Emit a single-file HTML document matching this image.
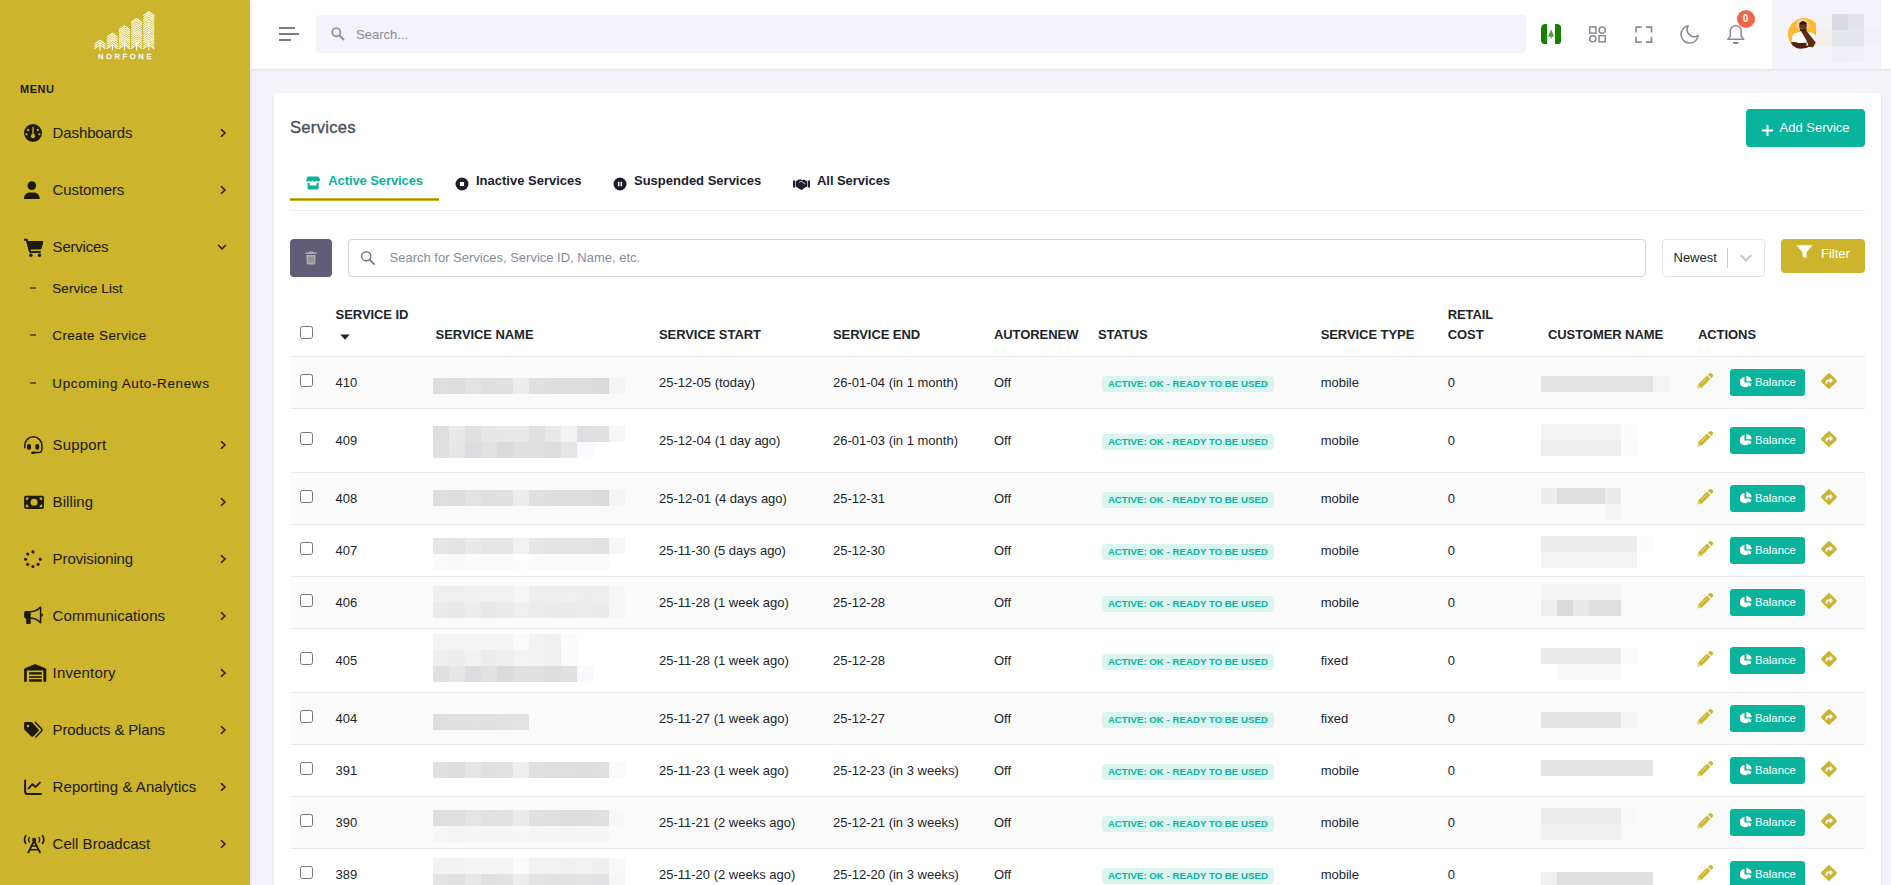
<!DOCTYPE html>
<html lang="en"><head><meta charset="utf-8"><title>Services</title>
<style>
*{box-sizing:border-box;margin:0;padding:0}
html,body{width:1891px;height:885px;overflow:hidden}
body{font-family:"Liberation Sans",Arial,sans-serif;font-size:13px;line-height:1.5;color:#212529;background:#f3f3f9;position:relative}
.abs{position:absolute}
#sidebar{position:absolute;left:0;top:0;width:250px;height:885px;background:#ccb42c;box-shadow:0 2px 4px rgba(15,34,58,.12);z-index:5}
#topbar{position:absolute;left:250px;top:0;width:1641px;height:69px;background:#fff;box-shadow:0 1px 2px rgba(56,65,74,.1);z-index:3}
.menu-title{position:absolute;left:20px;top:81px;font-size:11px;font-weight:700;letter-spacing:.5px;color:#1d1a08;line-height:16px}
.nav-item{position:absolute;left:0;width:250px;height:24px;color:#1d1a08;font-size:15px;line-height:24px}
.nav-item .ic{position:absolute;left:22px;top:0;width:26px;height:24px}
.nav-item .tx{position:absolute;left:52.6px;top:0;white-space:nowrap}
.nav-item .ch{position:absolute;left:218.7px;top:7.1px;width:8px;height:10px}
.sub-item{position:absolute;left:0;width:250px;height:20px;color:#1d1a08;font-size:13.5px;line-height:20px}
.sub-item .ds{position:absolute;left:30.3px;top:8.3px;width:6px;height:1.5px;background:#655a18}
.sub-item .tx{position:absolute;left:52.3px;top:0;white-space:nowrap;-webkit-text-stroke:.1px #1d1a08}
#card{position:absolute;left:274px;top:93px;width:1607px;height:900px;background:#fff;border-radius:4px;box-shadow:0 1px 2px rgba(56,65,74,.15)}
h4.title{position:absolute;left:290px;top:116px;font-size:16.6px;font-weight:400;color:#495057;line-height:24px;letter-spacing:.28px;-webkit-text-stroke:.35px #495057}
.btn-add{position:absolute;left:1746px;top:109px;width:119px;height:38px;background:#0ab39c;border-radius:4px;color:#fff;font-size:13px;line-height:38px}
.tab{position:absolute;top:171px;height:20px;font-weight:700;font-size:13px;line-height:20px;color:#1c1c2c;white-space:nowrap}
.tabline{position:absolute;left:290px;top:210px;width:1575px;height:1px;background:#e9ebec}
table{position:absolute;left:290px;top:293px;width:1575px;border-collapse:collapse;table-layout:fixed}
th{font-weight:700;text-align:left;vertical-align:bottom;padding:12px 9.6px;color:#212529;text-transform:uppercase;border-bottom:1px solid #e9ebec;line-height:19.5px;font-size:13px;letter-spacing:-.07px}
td{padding:12px 9.6px;vertical-align:middle;border-bottom:1px solid #e9ebec;line-height:19.5px;white-space:nowrap;height:52px}
tr.s td{background:#fafafa}
tr.t td{height:64px}
.cb{display:inline-block;width:13px;height:13px;border:1px solid #767676;border-radius:2.5px;background:#fff;vertical-align:middle;position:relative;top:-2.5px}
.badge{display:inline-block;background:#daf4f0;color:#0ab39c;font-size:9.7px;font-weight:700;line-height:9.7px;padding:3px 5.9px;border-radius:4px;margin-left:4px;position:relative;top:.4px}
.bal{position:absolute;width:75px;height:27px;background:#0ab39c;border-radius:3.2px;color:#fff;font-size:11.375px;line-height:27px}
.blk{position:absolute;height:16px}
</style></head>
<body>
<div id="sidebar">
<svg class="abs" style="left:0;top:0" width="250" height="70" viewBox="0 0 250 70"><path d="M94.50 44.40 L100.00 40.20 L105.50 44.40 M94.50 46.60 L100.00 42.40 L105.50 46.60 M94.50 48.80 L100.00 44.60 L105.50 48.80" fill="none" stroke="#fffef4" stroke-width="1.100" stroke-linejoin="miter"/><path d="M100.00 44.60 V50.4" stroke="#fffef4" stroke-width="1.200" fill="none"/><path d="M106.90 37.40 L112.40 33.20 L117.90 37.40 M106.90 39.68 L112.40 35.48 L117.90 39.68 M106.90 41.96 L112.40 37.76 L117.90 41.96 M106.90 44.24 L112.40 40.04 L117.90 44.24 M106.90 46.52 L112.40 42.32 L117.90 46.52 M106.90 48.80 L112.40 44.60 L117.90 48.80" fill="none" stroke="#fffef4" stroke-width="1.100" stroke-linejoin="miter"/><path d="M112.40 44.60 V50.4" stroke="#fffef4" stroke-width="1.200" fill="none"/><path d="M119.00 30.00 L124.50 25.80 L130.00 30.00 M119.00 32.09 L124.50 27.89 L130.00 32.09 M119.00 34.18 L124.50 29.98 L130.00 34.18 M119.00 36.27 L124.50 32.07 L130.00 36.27 M119.00 38.36 L124.50 34.16 L130.00 38.36 M119.00 40.44 L124.50 36.24 L130.00 40.44 M119.00 42.53 L124.50 38.33 L130.00 42.53 M119.00 44.62 L124.50 40.42 L130.00 44.62 M119.00 46.71 L124.50 42.51 L130.00 46.71 M119.00 48.80 L124.50 44.60 L130.00 48.80" fill="none" stroke="#fffef4" stroke-width="1.100" stroke-linejoin="miter"/><path d="M124.50 44.60 V50.4" stroke="#fffef4" stroke-width="1.200" fill="none"/><path d="M131.10 22.70 L136.60 18.50 L142.10 22.70 M131.10 24.88 L136.60 20.68 L142.10 24.88 M131.10 27.05 L136.60 22.85 L142.10 27.05 M131.10 29.22 L136.60 25.02 L142.10 29.22 M131.10 31.40 L136.60 27.20 L142.10 31.40 M131.10 33.57 L136.60 29.37 L142.10 33.57 M131.10 35.75 L136.60 31.55 L142.10 35.75 M131.10 37.92 L136.60 33.72 L142.10 37.92 M131.10 40.10 L136.60 35.90 L142.10 40.10 M131.10 42.27 L136.60 38.07 L142.10 42.27 M131.10 44.45 L136.60 40.25 L142.10 44.45 M131.10 46.62 L136.60 42.42 L142.10 46.62 M131.10 48.80 L136.60 44.60 L142.10 48.80" fill="none" stroke="#fffef4" stroke-width="1.100" stroke-linejoin="miter"/><path d="M136.60 44.60 V50.4" stroke="#fffef4" stroke-width="1.200" fill="none"/><path d="M143.30 15.80 L148.80 11.60 L154.30 15.80 M143.30 18.00 L148.80 13.80 L154.30 18.00 M143.30 20.20 L148.80 16.00 L154.30 20.20 M143.30 22.40 L148.80 18.20 L154.30 22.40 M143.30 24.60 L148.80 20.40 L154.30 24.60 M143.30 26.80 L148.80 22.60 L154.30 26.80 M143.30 29.00 L148.80 24.80 L154.30 29.00 M143.30 31.20 L148.80 27.00 L154.30 31.20 M143.30 33.40 L148.80 29.20 L154.30 33.40 M143.30 35.60 L148.80 31.40 L154.30 35.60 M143.30 37.80 L148.80 33.60 L154.30 37.80 M143.30 40.00 L148.80 35.80 L154.30 40.00 M143.30 42.20 L148.80 38.00 L154.30 42.20 M143.30 44.40 L148.80 40.20 L154.30 44.40 M143.30 46.60 L148.80 42.40 L154.30 46.60 M143.30 48.80 L148.80 44.60 L154.30 48.80" fill="none" stroke="#fffef4" stroke-width="1.100" stroke-linejoin="miter"/><path d="M148.80 44.60 V50.4" stroke="#fffef4" stroke-width="1.200" fill="none"/><text x="97.9" y="59.2" font-family="Liberation Sans, Arial, sans-serif" font-size="7.500" font-weight="400" fill="#fffef4" stroke="#fffef4" stroke-width=".3" textLength="53.5" lengthAdjust="spacing">NORFONE</text></svg>
<div class="menu-title">MENU</div>
<div class="nav-item" style="top:121px"><svg class="ic" viewBox="0 0 26 24"><g transform="translate(0 1)"><circle cx="11" cy="11" r="9" fill="#1d1a08"/><circle cx="11" cy="14.2" r="2.1" fill="#ccb42c"/><rect x="10.3" y="5" width="1.4" height="8" fill="#ccb42c"/><circle cx="6.2" cy="8" r="1.15" fill="#ccb42c"/><circle cx="15.8" cy="8" r="1.15" fill="#ccb42c"/><circle cx="4.6" cy="12.3" r="1.15" fill="#ccb42c"/><circle cx="17.4" cy="12.3" r="1.15" fill="#ccb42c"/></g></svg><span class="tx" style="letter-spacing:-0.118px">Dashboards</span><svg class="ch" viewBox="0 0 8 10"><path d="M2 1.200L6 5 2 8.800" fill="none" stroke="#1d1a08" stroke-width="1.500"/></svg></div>
<div class="nav-item" style="top:178px"><svg class="ic" viewBox="0 0 26 24"><g transform="translate(-1.2 1)"><circle cx="11" cy="6.6" r="4.3" fill="#1d1a08"/><path d="M3.1 20c0-4.2 2.600-6.600 6-6.600h3.800c3.400 0 6 2.400 6 6.600z" fill="#1d1a08"/></g></svg><span class="tx" style="letter-spacing:-0.102px">Customers</span><svg class="ch" viewBox="0 0 8 10"><path d="M2 1.200L6 5 2 8.800" fill="none" stroke="#1d1a08" stroke-width="1.500"/></svg></div>
<div class="nav-item" style="top:235px"><svg class="ic" viewBox="0 0 26 24"><g transform="translate(.5 1)"><path d="M1.500 2.800h2.800c.5 0 .9.300 1 .8l.3 1.400h14.200c.7 0 1.200.700 1 1.300l-1.800 6.500c-.100.500-.500.800-1 .8H8.200l.300 1.500h9.700v2H7.600c-.5 0-.9-.300-1-.8L3.500 4.800h-2z" fill="#1d1a08"/><circle cx="8.400" cy="19.200" r="1.700" fill="#1d1a08"/><circle cx="17" cy="19.200" r="1.700" fill="#1d1a08"/></g></svg><span class="tx" style="letter-spacing:-0.215px">Services</span><svg class="ch" style="width:10px;height:8px;left:217px;top:7.600px" viewBox="0 0 10 8"><path d="M1.200 2L5 6 8.800 2" fill="none" stroke="#1d1a08" stroke-width="1.500"/></svg></div>
<div class="nav-item" style="top:433px"><svg class="ic" viewBox="0 0 26 24"><path d="M2.800 14.700V12.400a8.550 8.550 0 0 1 17.100 0V16.400a3.200 3.200 0 0 1-3.200 3.200H12" fill="none" stroke="#1d1a08" stroke-width="1.500" stroke-linecap="round"/><rect x="5" y="10.900" width="4" height="5.900" rx="1.800" fill="#1d1a08"/><rect x="13.400" y="10.900" width="3.800" height="5.900" rx="1.800" fill="#1d1a08"/><ellipse cx="11.100" cy="19.800" rx="2.100" ry="1.250" fill="#1d1a08"/></svg><span class="tx" style="letter-spacing:0.180px">Support</span><svg class="ch" viewBox="0 0 8 10"><path d="M2 1.200L6 5 2 8.800" fill="none" stroke="#1d1a08" stroke-width="1.500"/></svg></div>
<div class="nav-item" style="top:490px"><svg class="ic" viewBox="0 0 26 24"><rect x="2.100" y="5.800" width="19.900" height="13.100" rx="1.800" fill="#1d1a08"/><circle cx="12.050" cy="12.350" r="3.500" fill="#ccb42c"/><path d="M3.900 7.500h2.700a2.700 2.700 0 0 1-2.700 2.700zM20.200 7.500h-2.700a2.700 2.700 0 0 0 2.700 2.700zM3.900 17.200h2.700a2.700 2.700 0 0 0-2.700-2.700zM20.200 17.200h-2.700a2.700 2.700 0 0 1 2.700-2.700z" fill="#ccb42c"/></svg><span class="tx" style="letter-spacing:0.083px">Billing</span><svg class="ch" viewBox="0 0 8 10"><path d="M2 1.200L6 5 2 8.800" fill="none" stroke="#1d1a08" stroke-width="1.500"/></svg></div>
<div class="nav-item" style="top:547px"><svg class="ic" viewBox="0 0 26 24"><circle cx="10.90" cy="4.90" r="1.550" fill="#1d1a08"/><circle cx="5.74" cy="7.04" r="1.550" fill="#1d1a08"/><circle cx="3.60" cy="12.20" r="1.550" fill="#1d1a08"/><circle cx="5.74" cy="17.36" r="1.550" fill="#1d1a08"/><circle cx="10.90" cy="19.50" r="1.550" fill="#1d1a08"/><circle cx="16.06" cy="17.36" r="1.550" fill="#1d1a08"/><circle cx="18.20" cy="12.20" r="1.550" fill="#1d1a08"/></svg><span class="tx" style="letter-spacing:-0.101px">Provisioning</span><svg class="ch" viewBox="0 0 8 10"><path d="M2 1.200L6 5 2 8.800" fill="none" stroke="#1d1a08" stroke-width="1.500"/></svg></div>
<div class="nav-item" style="top:604px"><svg class="ic" viewBox="0 0 26 24"><path d="M3.900 7h4.800v7.500H3.900a1.800 1.800 0 0 1-1.800-1.800V8.800A1.800 1.800 0 0 1 3.900 7z" fill="#1d1a08"/><path d="M4.200 14h4.500v5c0 .6-.4 1-1 1H5.200c-.6 0-1-.4-1-1z" fill="#1d1a08"/><path d="M8.600 7.700C13 7.500 16.400 5.700 18.600 3.100V18.800C16.400 16.200 13 14.200 8.600 13.900" fill="none" stroke="#1d1a08" stroke-width="1.500" stroke-linejoin="round"/><path d="M19.300 9.300a1.700 1.700 0 0 1 0 3.400z" fill="#1d1a08"/></svg><span class="tx" style="letter-spacing:0.056px">Communications</span><svg class="ch" viewBox="0 0 8 10"><path d="M2 1.200L6 5 2 8.800" fill="none" stroke="#1d1a08" stroke-width="1.500"/></svg></div>
<div class="nav-item" style="top:661px"><svg class="ic" viewBox="0 0 26 24"><path d="M2.100 8.600c0-.6.3-1.100.9-1.300L12.600 3.200c.3-.1.700-.1 1 0L23.400 7.300c.5.200.9.700.9 1.300V20.700H21.400V10.400c0-.6-.4-1-1-1H5.800c-.6 0-1 .4-1 1V20.700H2.100z" fill="#1d1a08"/><rect x="7.100" y="11.200" width="12.700" height="2.300" fill="#1d1a08"/><rect x="7.100" y="15.200" width="12.700" height="1.600" fill="#1d1a08"/><rect x="7.100" y="18.200" width="12.700" height="2.500" fill="#1d1a08"/></svg><span class="tx" style="letter-spacing:0.156px">Inventory</span><svg class="ch" viewBox="0 0 8 10"><path d="M2 1.200L6 5 2 8.800" fill="none" stroke="#1d1a08" stroke-width="1.500"/></svg></div>
<div class="nav-item" style="top:718px"><svg class="ic" viewBox="0 0 26 24"><path d="M2.100 5.600c0-.9.700-1.600 1.600-1.600h5.200c.5 0 1 .2 1.300.6l6.100 6.600c.6.700.6 1.700-.1 2.300l-4.800 4.700c-.7.700-1.800.6-2.400 0L2.700 11.900c-.4-.4-.6-.8-.6-1.300z" fill="#1d1a08"/><circle cx="6" cy="8" r="1.250" fill="#ccb42c"/><path d="M13.500 4.400l5.700 6.200c.8.800.8 2.100 0 2.900l-5.300 5.600" fill="none" stroke="#1d1a08" stroke-width="1.500" stroke-linecap="round"/></svg><span class="tx" style="letter-spacing:-0.172px">Products &amp; Plans</span><svg class="ch" viewBox="0 0 8 10"><path d="M2 1.200L6 5 2 8.800" fill="none" stroke="#1d1a08" stroke-width="1.500"/></svg></div>
<div class="nav-item" style="top:775px"><svg class="ic" viewBox="0 0 26 24"><path d="M3.100 5.400V16.500c0 1.400 1.100 2.500 2.500 2.500H19" fill="none" stroke="#1d1a08" stroke-width="2" stroke-linecap="round"/><path d="M6.600 13.300l3.900-4.200 2.900 3 4.500-4.500" fill="none" stroke="#1d1a08" stroke-width="1.800" stroke-linecap="round" stroke-linejoin="round"/></svg><span class="tx" style="letter-spacing:0.058px">Reporting &amp; Analytics</span><svg class="ch" viewBox="0 0 8 10"><path d="M2 1.200L6 5 2 8.800" fill="none" stroke="#1d1a08" stroke-width="1.500"/></svg></div>
<div class="nav-item" style="top:832px"><svg class="ic" viewBox="0 0 26 24"><path d="M6.400 20.300L12.150 8.600 17.900 20.300" fill="none" stroke="#1d1a08" stroke-width="1.900" stroke-linejoin="round" stroke-linecap="round"/><path d="M8.300 17.700h7.700M10.200 13.900h3.900" stroke="#1d1a08" stroke-width="1.500"/><circle cx="12.150" cy="7.800" r="2" fill="#1d1a08"/><path d="M7.300 5.400c-.9 1.500-.9 3.100 0 4.600M17 5.400c.9 1.500.9 3.100 0 4.600" fill="none" stroke="#1d1a08" stroke-width="1.300" stroke-linecap="round"/><path d="M3.700 3.600c-1.500 2.600-1.500 5.300 0 7.900M20.600 3.600c1.500 2.600 1.500 5.300 0 7.900" fill="none" stroke="#1d1a08" stroke-width="1.600" stroke-linecap="round"/></svg><span class="tx" style="letter-spacing:0.004px">Cell Broadcast</span><svg class="ch" viewBox="0 0 8 10"><path d="M2 1.200L6 5 2 8.800" fill="none" stroke="#1d1a08" stroke-width="1.500"/></svg></div>
<div class="sub-item" style="top:279px"><span class="ds"></span><span class="tx" style="letter-spacing:0.035px">Service List</span></div>
<div class="sub-item" style="top:326px"><span class="ds"></span><span class="tx" style="letter-spacing:0.358px">Create Service</span></div>
<div class="sub-item" style="top:374px"><span class="ds"></span><span class="tx" style="letter-spacing:0.619px">Upcoming Auto-Renews</span></div>
</div>
<div id="topbar">
<div class="abs" style="left:29px;top:27px;width:16px;height:2px;background:#787b8c"></div><div class="abs" style="left:29px;top:33px;width:20px;height:2px;background:#787b8c"></div><div class="abs" style="left:29px;top:39px;width:12px;height:2px;background:#787b8c"></div>
<div class="abs" style="left:66px;top:15px;width:1210px;height:38px;background:#f3f3f9;border-radius:4px"></div>
<svg class="abs" style="left:80px;top:26px" width="16" height="16" viewBox="0 0 16 16"><circle cx="6.300" cy="6.300" r="4.100" fill="none" stroke="#878a99" stroke-width="1.600"/><path d="M9.400 9.400L14 14" stroke="#878a99" stroke-width="1.800"/></svg>
<div class="abs" style="left:106px;top:24.500px;font-size:13px;line-height:20px;color:#878a99">Search...</div>
<svg class="abs" style="left:1290.800px;top:23.700px" width="20.400" height="20.400" viewBox="0 0 20.400 20.400"><defs><clipPath id="fc"><rect x="0" y="0" width="20.400" height="20.400" rx="4.200"/></clipPath></defs><g clip-path="url(#fc)"><rect width="20.400" height="20.400" fill="#fff"/><rect width="6.150" height="20.400" fill="#1a8000"/><rect x="14.050" width="6.350" height="20.400" fill="#1a8000"/><path d="M10.100 5.200l3 7.600h-2.500v2h-1v-2H7.100z" fill="#2f8a1c" opacity=".85"/></g></svg>
<svg class="abs" style="left:1338px;top:25px" width="20" height="20" viewBox="0 0 20 20" fill="none" stroke="#878a99" stroke-width="1.500"><rect x="1.750" y="1.950" width="6.200" height="6.200"/><circle cx="14.150" cy="5.050" r="3.100"/><circle cx="4.850" cy="13.750" r="3.100"/><rect x="11.050" y="10.650" width="6.200" height="6.200"/></svg>
<svg class="abs" style="left:1384px;top:25px" width="20" height="20" viewBox="0 0 20 20" fill="none" stroke="#878a99" stroke-width="1.700"><path d="M2.050 7.400V2.050H7.600M12 2.050h5.550V7.400M17.550 11.700v5.350H12M7.600 17.050H2.050V11.700"/></svg>
<svg class="abs" style="left:1429px;top:24px" width="22" height="22" viewBox="0 0 22 22" fill="none" stroke="#878a99" stroke-width="1.500"><path d="M9.200 1.800A8.700 8.700 0 1 0 19.300 11.500 7.200 7.200 0 0 1 9.200 1.800z" stroke-linejoin="round"/></svg>
<svg class="abs" style="left:1475px;top:23px" width="22" height="22" viewBox="0 0 22 22" fill="none" stroke="#878a99" stroke-width="1.500"><path d="M5.300 13.200V8.100a5.450 5.450 0 0 1 10.900 0v5.100l2.500 3.100H2.800z" stroke-linejoin="round"/><path d="M7.800 19h5.900a2.950 2.200 0 0 1-5.900 0z" fill="#878a99" stroke="none"/></svg>
<div class="abs" style="left:1486.600px;top:9.600px;width:18px;height:18px;border-radius:50%;background:#f06548;color:#fff;font-size:10px;font-weight:700;line-height:18px;text-align:center">0</div>
<div class="abs" style="left:1522px;top:0;width:109px;height:69px;background:#f3f3f9"></div>
<svg class="abs" style="left:1538px;top:18px" width="32" height="32" viewBox="0 0 32 32"><defs><clipPath id="av"><circle cx="16" cy="16" r="16"/></clipPath></defs><g clip-path="url(#av)"><rect width="32" height="32" fill="#fbba30"/><ellipse cx="14.500" cy="6.700" rx="6.300" ry="5.600" fill="#e9d4a9"/><path d="M4.200 32V19.200c0-2.300 1.400-3.700 3.800-4.300l5.400-1.300h5.200l5.400 1.300c2.400.6 3.800 2 3.800 4.300V32z" fill="#fafafc"/><ellipse cx="15" cy="7.800" rx="3.900" ry="4.700" fill="#6a381b"/><path d="M11.400 5.600c.8-2.300 6-2.700 7.200 0l-.5.900h-6.300z" fill="#2c170c"/><path d="M11.700 9.800c1 2.700 5.400 2.900 6.500 0l.3 2.700-3 1.700-3.400-1.500z" fill="#351a0c"/><path d="M13.400 13.700l4.800-1.300 9.600 12-2.800 5.200-5.200-1.200-1.300-6z" fill="#5c2c14"/><path d="M2.800 24.700c2.400-1.100 5-.6 7.600.2l9.300-.2.900 4.400c-4.600 2-11.600 2.600-16-.9z" fill="#4f2510"/><rect x="18.400" y="24.600" width="1.500" height="3.200" fill="#e4e4e8"/></g></svg>
<div class="blk" style="left:1566px;top:14px;width:16px;background:#f2f1f5"></div><div class="blk" style="left:1582px;top:14px;width:16px;background:#d9d9e1"></div><div class="blk" style="left:1598px;top:14px;width:16px;background:#e3e4ea"></div><div class="blk" style="left:1566px;top:30px;width:16px;background:#f4eeeb"></div><div class="blk" style="left:1582px;top:30px;width:16px;background:#e4e5ec"></div><div class="blk" style="left:1598px;top:30px;width:16px;background:#e6e7ee"></div><div class="blk" style="left:1614px;top:30px;width:16px;background:#f0f1f7"></div><div class="blk" style="left:1582px;top:46px;width:16px;background:#eeeff5"></div><div class="blk" style="left:1598px;top:46px;width:16px;background:#eff0f6"></div>
</div>
<div id="card"></div>
<h4 class="title">Services</h4>
<div class="btn-add"><svg class="abs" style="left:15.700px;top:16px" width="11" height="11" viewBox="0 0 11 11"><path d="M5.500 0v11M0 5.500h11" stroke="#fff" stroke-width="1.900"/></svg><span class="abs" style="left:33.500px;top:0;white-space:nowrap;line-height:37px">Add Service</span></div>
<svg class="abs" style="left:306px;top:176.200px" width="14.300" height="14" viewBox="0 0 15 15" preserveAspectRatio="none"><path d="M1.800 .5h11.400l1.500 3.400c0 1.300-1 2.200-2.100 2.200-.9 0-1.600-.5-1.900-1.200-.3.700-1 1.200-1.900 1.200S7.300 5.600 7 4.900c-.3.700-1 1.200-1.900 1.200S3.500 5.600 3.200 4.900C2.900 5.600 2.200 6.100 1.300 6.100.6 6.100.3 5 .3 3.900z" fill="#0ab39c"/><path d="M1.700 7.200h2.200v3h7.200v-3h2.200v5.600c0 .9-.7 1.600-1.600 1.600H3.300c-.9 0-1.600-.7-1.600-1.600z" fill="#0ab39c"/></svg>
<div class="tab" style="left:328.300px;letter-spacing:-.1px;color:#0ab39c">Active Services</div>
<div class="abs" style="left:290px;top:198px;width:149px;height:3px;background:#ccb42c"></div><div class="abs" style="left:290px;top:199px;width:149px;height:1px;background:#0ab39c"></div>
<svg class="abs" style="left:455px;top:177px" width="14" height="14" viewBox="0 0 14 14"><circle cx="7" cy="7" r="6.500" fill="#1c1c2c"/><rect x="4.900" y="4.900" width="4.200" height="4.200" rx=".7" fill="#fff"/></svg>
<div class="tab" style="left:476px">Inactive Services</div>
<svg class="abs" style="left:613px;top:177px" width="14" height="14" viewBox="0 0 14 14"><circle cx="7" cy="7" r="6.500" fill="#1c1c2c"/><rect x="4.900" y="4.700" width="1.500" height="4.600" rx=".4" fill="#fff"/><rect x="7.600" y="4.700" width="1.500" height="4.600" rx=".4" fill="#fff"/></svg>
<div class="tab" style="left:634px">Suspended Services</div>
<svg class="abs" style="left:793px;top:177px" width="17" height="14" viewBox="0 0 17 14"><path d="M0 3.600h2.200v7H0zM14.800 3.600H17v7h-2.200z" fill="#1c1c2c"/><path d="M2.800 4.200l3-1.600h2.400l1 .6 1.600-.6 3.400 1.600v5.600l-1.400.2-3.400 2.600c-.6.400-1.300.4-1.800 0L2.800 9.800z" fill="#1c1c2c"/><path d="M6.200 5.400l2.200-1.200 3.800 3" fill="none" stroke="#fff" stroke-width=".8"/></svg>
<div class="tab" style="left:817px;letter-spacing:-.06px">All Services</div>
<div class="tabline"></div>
<div class="abs" style="left:290px;top:239px;width:42px;height:38px;background:#615d76;border-radius:4px"><svg class="abs" style="left:15px;top:12px" width="12" height="14" viewBox="0 0 12 14"><path d="M4 .5h4l.5 1H11.500v1.600H.5V1.500H3.500zM1.300 4h9.400l-.5 8.600c0 .5-.5.900-1 .9H2.800c-.5 0-1-.4-1-.9z" fill="#adabb0"/><path d="M4 5.500v6.300M6 5.500v6.300M8 5.500v6.300" stroke="#615d76" stroke-width=".6"/></svg></div>
<div class="abs" style="left:348px;top:239px;width:1298px;height:38px;border:1px solid #ced4da;border-radius:4px;background:#fff"></div>
<svg class="abs" style="left:360.200px;top:250px" width="15.600" height="15.600" viewBox="0 0 17 17"><circle cx="6.800" cy="6.800" r="5" fill="none" stroke="#74788d" stroke-width="1.600"/><path d="M10.500 10.500L15.300 15.300" stroke="#74788d" stroke-width="1.900" stroke-linecap="round"/></svg>
<div class="abs" style="left:389.500px;top:248px;font-size:13px;line-height:20px;color:#878a99;white-space:nowrap">Search for Services, Service ID, Name, etc.</div>
<div class="abs" style="left:1662px;top:239px;width:103px;height:38px;border:1px solid #e2e5e8;border-radius:4px;background:#fff"></div>
<div class="abs" style="left:1673.500px;top:248px;font-size:13px;line-height:20px;color:#212529">Newest</div>
<div class="abs" style="left:1727px;top:248px;width:1px;height:20px;background:#cccccc"></div>
<svg class="abs" style="left:1739px;top:253px" width="14" height="10" viewBox="0 0 14 10"><path d="M1.800 2.300L7 7.500l5.200-5.200" fill="none" stroke="#c8c8c8" stroke-width="2.100"/></svg>
<div class="abs" style="left:1781px;top:239px;width:84px;height:34px;background:#ccb42c;border-radius:4px;color:#fff;font-size:13px"><svg class="abs" style="left:14.500px;top:6.300px" width="17" height="14" viewBox="0 0 17 14"><path d="M.3.200h16.400L10.400 7.600v5.800l-3.800-2V7.600z" fill="#fff"/></svg><span class="abs" style="left:40px;top:5px;line-height:20px">Filter</span></div>
<table><colgroup><col style="width:36px"><col style="width:100px"><col style="width:223.4px"><col style="width:174px"><col style="width:161px"><col style="width:104px"><col style="width:222.7px"><col style="width:127px"><col style="width:100.3px"><col style="width:150px"><col style="width:176.6px"></colgroup>
<thead><tr><th><span class="cb" style="top:-3px"></span></th><th>SERVICE ID<br><svg width="10" height="6" viewBox="0 0 10 6" style="margin-left:4px;position:relative;top:1px"><path d="M.3.500h9.400L5 5.700z" fill="#212529"/></svg></th><th>SERVICE NAME</th><th>SERVICE START</th><th>SERVICE END</th><th>AUTORENEW</th><th>STATUS</th><th>SERVICE TYPE</th><th>RETAIL<br>COST</th><th>CUSTOMER NAME</th><th>ACTIONS</th></tr></thead>
<tbody>
<tr class="s"><td><span class="cb"></span></td><td>410</td><td></td><td>25-12-05 (today)</td><td>26-01-04 (in 1 month)</td><td>Off</td><td><span class="badge">ACTIVE: OK - READY TO BE USED</span></td><td>mobile</td><td>0</td><td></td><td></td></tr>
<tr class="t"><td><span class="cb"></span></td><td>409</td><td></td><td>25-12-04 (1 day ago)</td><td>26-01-03 (in 1 month)</td><td>Off</td><td><span class="badge">ACTIVE: OK - READY TO BE USED</span></td><td>mobile</td><td>0</td><td></td><td></td></tr>
<tr class="s"><td><span class="cb"></span></td><td>408</td><td></td><td>25-12-01 (4 days ago)</td><td>25-12-31</td><td>Off</td><td><span class="badge">ACTIVE: OK - READY TO BE USED</span></td><td>mobile</td><td>0</td><td></td><td></td></tr>
<tr class=""><td><span class="cb"></span></td><td>407</td><td></td><td>25-11-30 (5 days ago)</td><td>25-12-30</td><td>Off</td><td><span class="badge">ACTIVE: OK - READY TO BE USED</span></td><td>mobile</td><td>0</td><td></td><td></td></tr>
<tr class="s"><td><span class="cb"></span></td><td>406</td><td></td><td>25-11-28 (1 week ago)</td><td>25-12-28</td><td>Off</td><td><span class="badge">ACTIVE: OK - READY TO BE USED</span></td><td>mobile</td><td>0</td><td></td><td></td></tr>
<tr class="t"><td><span class="cb"></span></td><td>405</td><td></td><td>25-11-28 (1 week ago)</td><td>25-12-28</td><td>Off</td><td><span class="badge">ACTIVE: OK - READY TO BE USED</span></td><td>fixed</td><td>0</td><td></td><td></td></tr>
<tr class="s"><td><span class="cb"></span></td><td>404</td><td></td><td>25-11-27 (1 week ago)</td><td>25-12-27</td><td>Off</td><td><span class="badge">ACTIVE: OK - READY TO BE USED</span></td><td>fixed</td><td>0</td><td></td><td></td></tr>
<tr class=""><td><span class="cb"></span></td><td>391</td><td></td><td>25-11-23 (1 week ago)</td><td>25-12-23 (in 3 weeks)</td><td>Off</td><td><span class="badge">ACTIVE: OK - READY TO BE USED</span></td><td>mobile</td><td>0</td><td></td><td></td></tr>
<tr class="s"><td><span class="cb"></span></td><td>390</td><td></td><td>25-11-21 (2 weeks ago)</td><td>25-12-21 (in 3 weeks)</td><td>Off</td><td><span class="badge">ACTIVE: OK - READY TO BE USED</span></td><td>mobile</td><td>0</td><td></td><td></td></tr>
<tr class=""><td><span class="cb"></span></td><td>389</td><td></td><td>25-11-20 (2 weeks ago)</td><td>25-12-20 (in 3 weeks)</td><td>Off</td><td><span class="badge">ACTIVE: OK - READY TO BE USED</span></td><td>mobile</td><td>0</td><td></td><td></td></tr>
</tbody></table>
<svg class="abs" style="left:1696px;top:372.0px" width="18" height="18" viewBox="0 0 18 18"><path d="M13.200 1.400c.7-.7 1.800-.7 2.500 0l.9.900c.7.700.7 1.800 0 2.500l-1.300 1.300-3.400-3.400zM11 3.600l3.400 3.400-8.600 8.600-4.300 1 .9-4.400z" fill="#ccb42c"/><path d="M5.300 11.900l5.600-5.600" stroke="#fff" stroke-width=".7" opacity=".75"/><path d="M2.900 13.500l1.700 1.700-2.100.5z" fill="#fff" opacity=".8"/></svg><div class="bal" style="left:1730px;top:368.5px"><svg class="abs" style="left:9.500px;top:7.500px" width="12" height="12" viewBox="0 0 12 12"><path d="M5.200.8v6h6a5.600 5.600 0 1 1-6-6z" fill="#fff" transform="translate(-.3 .3) scale(.92)"/><path d="M6.300 0a5.300 5.300 0 0 1 5.300 5.300H6.300z" fill="#fff"/><path d="M6.600 7.200h4.800a5.600 5.600 0 0 1-1.500 3.300z" fill="#fff"/></svg><span class="abs" style="left:24.900px;top:0">Balance</span></div><svg class="abs" style="left:1819.500px;top:371.5px" width="18" height="18" viewBox="0 0 18 18"><rect x="3" y="3" width="12" height="12" rx="1.600" transform="rotate(45 9 9)" fill="#ccb42c"/><path d="M5.600 11.600V9.800c0-1.300 1-2.300 2.300-2.300h2V5.600L13 8.500l-3.100 2.900V9.500h-2c-.2 0-.4.200-.4.400v1.700z" fill="#fff"/></svg>
<svg class="abs" style="left:1696px;top:430.0px" width="18" height="18" viewBox="0 0 18 18"><path d="M13.200 1.400c.7-.7 1.800-.7 2.500 0l.9.900c.7.700.7 1.800 0 2.500l-1.300 1.300-3.400-3.400zM11 3.600l3.400 3.400-8.600 8.600-4.300 1 .9-4.400z" fill="#ccb42c"/><path d="M5.300 11.900l5.600-5.600" stroke="#fff" stroke-width=".7" opacity=".75"/><path d="M2.900 13.500l1.700 1.700-2.100.5z" fill="#fff" opacity=".8"/></svg><div class="bal" style="left:1730px;top:426.5px"><svg class="abs" style="left:9.500px;top:7.500px" width="12" height="12" viewBox="0 0 12 12"><path d="M5.200.8v6h6a5.600 5.600 0 1 1-6-6z" fill="#fff" transform="translate(-.3 .3) scale(.92)"/><path d="M6.300 0a5.300 5.300 0 0 1 5.300 5.300H6.300z" fill="#fff"/><path d="M6.600 7.200h4.800a5.600 5.600 0 0 1-1.500 3.300z" fill="#fff"/></svg><span class="abs" style="left:24.900px;top:0">Balance</span></div><svg class="abs" style="left:1819.500px;top:429.5px" width="18" height="18" viewBox="0 0 18 18"><rect x="3" y="3" width="12" height="12" rx="1.600" transform="rotate(45 9 9)" fill="#ccb42c"/><path d="M5.600 11.600V9.800c0-1.300 1-2.300 2.300-2.300h2V5.600L13 8.500l-3.100 2.900V9.500h-2c-.2 0-.4.200-.4.400v1.700z" fill="#fff"/></svg>
<svg class="abs" style="left:1696px;top:488.0px" width="18" height="18" viewBox="0 0 18 18"><path d="M13.200 1.400c.7-.7 1.800-.7 2.500 0l.9.900c.7.700.7 1.800 0 2.500l-1.300 1.300-3.400-3.400zM11 3.600l3.400 3.400-8.600 8.600-4.300 1 .9-4.400z" fill="#ccb42c"/><path d="M5.300 11.900l5.600-5.600" stroke="#fff" stroke-width=".7" opacity=".75"/><path d="M2.900 13.500l1.700 1.700-2.100.5z" fill="#fff" opacity=".8"/></svg><div class="bal" style="left:1730px;top:484.5px"><svg class="abs" style="left:9.500px;top:7.500px" width="12" height="12" viewBox="0 0 12 12"><path d="M5.200.8v6h6a5.600 5.600 0 1 1-6-6z" fill="#fff" transform="translate(-.3 .3) scale(.92)"/><path d="M6.300 0a5.300 5.300 0 0 1 5.300 5.300H6.300z" fill="#fff"/><path d="M6.600 7.200h4.800a5.600 5.600 0 0 1-1.500 3.300z" fill="#fff"/></svg><span class="abs" style="left:24.900px;top:0">Balance</span></div><svg class="abs" style="left:1819.500px;top:487.5px" width="18" height="18" viewBox="0 0 18 18"><rect x="3" y="3" width="12" height="12" rx="1.600" transform="rotate(45 9 9)" fill="#ccb42c"/><path d="M5.600 11.600V9.800c0-1.300 1-2.300 2.300-2.300h2V5.600L13 8.500l-3.100 2.900V9.500h-2c-.2 0-.4.200-.4.400v1.700z" fill="#fff"/></svg>
<svg class="abs" style="left:1696px;top:540.0px" width="18" height="18" viewBox="0 0 18 18"><path d="M13.200 1.400c.7-.7 1.800-.7 2.500 0l.9.900c.7.700.7 1.800 0 2.500l-1.300 1.300-3.400-3.400zM11 3.600l3.400 3.400-8.600 8.600-4.300 1 .9-4.400z" fill="#ccb42c"/><path d="M5.300 11.900l5.600-5.600" stroke="#fff" stroke-width=".7" opacity=".75"/><path d="M2.900 13.500l1.700 1.700-2.100.5z" fill="#fff" opacity=".8"/></svg><div class="bal" style="left:1730px;top:536.5px"><svg class="abs" style="left:9.500px;top:7.500px" width="12" height="12" viewBox="0 0 12 12"><path d="M5.200.8v6h6a5.600 5.600 0 1 1-6-6z" fill="#fff" transform="translate(-.3 .3) scale(.92)"/><path d="M6.300 0a5.300 5.300 0 0 1 5.300 5.300H6.300z" fill="#fff"/><path d="M6.600 7.200h4.800a5.600 5.600 0 0 1-1.500 3.300z" fill="#fff"/></svg><span class="abs" style="left:24.900px;top:0">Balance</span></div><svg class="abs" style="left:1819.500px;top:539.5px" width="18" height="18" viewBox="0 0 18 18"><rect x="3" y="3" width="12" height="12" rx="1.600" transform="rotate(45 9 9)" fill="#ccb42c"/><path d="M5.600 11.600V9.800c0-1.300 1-2.300 2.300-2.300h2V5.600L13 8.500l-3.100 2.900V9.500h-2c-.2 0-.4.200-.4.400v1.700z" fill="#fff"/></svg>
<svg class="abs" style="left:1696px;top:592.0px" width="18" height="18" viewBox="0 0 18 18"><path d="M13.200 1.400c.7-.7 1.800-.7 2.500 0l.9.900c.7.700.7 1.800 0 2.500l-1.300 1.300-3.400-3.400zM11 3.600l3.400 3.400-8.600 8.600-4.300 1 .9-4.400z" fill="#ccb42c"/><path d="M5.300 11.900l5.600-5.600" stroke="#fff" stroke-width=".7" opacity=".75"/><path d="M2.900 13.500l1.700 1.700-2.100.5z" fill="#fff" opacity=".8"/></svg><div class="bal" style="left:1730px;top:588.5px"><svg class="abs" style="left:9.500px;top:7.500px" width="12" height="12" viewBox="0 0 12 12"><path d="M5.200.8v6h6a5.600 5.600 0 1 1-6-6z" fill="#fff" transform="translate(-.3 .3) scale(.92)"/><path d="M6.300 0a5.300 5.300 0 0 1 5.300 5.300H6.300z" fill="#fff"/><path d="M6.600 7.200h4.800a5.600 5.600 0 0 1-1.500 3.300z" fill="#fff"/></svg><span class="abs" style="left:24.900px;top:0">Balance</span></div><svg class="abs" style="left:1819.500px;top:591.5px" width="18" height="18" viewBox="0 0 18 18"><rect x="3" y="3" width="12" height="12" rx="1.600" transform="rotate(45 9 9)" fill="#ccb42c"/><path d="M5.600 11.600V9.800c0-1.300 1-2.300 2.300-2.300h2V5.600L13 8.500l-3.100 2.900V9.500h-2c-.2 0-.4.200-.4.400v1.700z" fill="#fff"/></svg>
<svg class="abs" style="left:1696px;top:650.0px" width="18" height="18" viewBox="0 0 18 18"><path d="M13.200 1.400c.7-.7 1.800-.7 2.500 0l.9.900c.7.700.7 1.800 0 2.500l-1.300 1.300-3.400-3.400zM11 3.600l3.400 3.400-8.600 8.600-4.300 1 .9-4.400z" fill="#ccb42c"/><path d="M5.300 11.900l5.600-5.600" stroke="#fff" stroke-width=".7" opacity=".75"/><path d="M2.900 13.500l1.700 1.700-2.100.5z" fill="#fff" opacity=".8"/></svg><div class="bal" style="left:1730px;top:646.5px"><svg class="abs" style="left:9.500px;top:7.500px" width="12" height="12" viewBox="0 0 12 12"><path d="M5.200.8v6h6a5.600 5.600 0 1 1-6-6z" fill="#fff" transform="translate(-.3 .3) scale(.92)"/><path d="M6.300 0a5.300 5.300 0 0 1 5.300 5.300H6.300z" fill="#fff"/><path d="M6.600 7.200h4.800a5.600 5.600 0 0 1-1.500 3.300z" fill="#fff"/></svg><span class="abs" style="left:24.900px;top:0">Balance</span></div><svg class="abs" style="left:1819.500px;top:649.5px" width="18" height="18" viewBox="0 0 18 18"><rect x="3" y="3" width="12" height="12" rx="1.600" transform="rotate(45 9 9)" fill="#ccb42c"/><path d="M5.600 11.600V9.800c0-1.300 1-2.300 2.300-2.300h2V5.600L13 8.500l-3.100 2.900V9.500h-2c-.2 0-.4.200-.4.400v1.700z" fill="#fff"/></svg>
<svg class="abs" style="left:1696px;top:708.0px" width="18" height="18" viewBox="0 0 18 18"><path d="M13.200 1.400c.7-.7 1.800-.7 2.500 0l.9.900c.7.700.7 1.800 0 2.500l-1.300 1.300-3.400-3.400zM11 3.600l3.400 3.400-8.600 8.600-4.300 1 .9-4.400z" fill="#ccb42c"/><path d="M5.300 11.900l5.600-5.600" stroke="#fff" stroke-width=".7" opacity=".75"/><path d="M2.900 13.500l1.700 1.700-2.100.5z" fill="#fff" opacity=".8"/></svg><div class="bal" style="left:1730px;top:704.5px"><svg class="abs" style="left:9.500px;top:7.500px" width="12" height="12" viewBox="0 0 12 12"><path d="M5.200.8v6h6a5.600 5.600 0 1 1-6-6z" fill="#fff" transform="translate(-.3 .3) scale(.92)"/><path d="M6.300 0a5.300 5.300 0 0 1 5.300 5.300H6.300z" fill="#fff"/><path d="M6.600 7.200h4.800a5.600 5.600 0 0 1-1.500 3.300z" fill="#fff"/></svg><span class="abs" style="left:24.900px;top:0">Balance</span></div><svg class="abs" style="left:1819.500px;top:707.5px" width="18" height="18" viewBox="0 0 18 18"><rect x="3" y="3" width="12" height="12" rx="1.600" transform="rotate(45 9 9)" fill="#ccb42c"/><path d="M5.600 11.600V9.800c0-1.300 1-2.300 2.300-2.300h2V5.600L13 8.500l-3.100 2.900V9.500h-2c-.2 0-.4.200-.4.400v1.700z" fill="#fff"/></svg>
<svg class="abs" style="left:1696px;top:760.0px" width="18" height="18" viewBox="0 0 18 18"><path d="M13.200 1.400c.7-.7 1.800-.7 2.500 0l.9.900c.7.700.7 1.800 0 2.500l-1.300 1.300-3.400-3.400zM11 3.600l3.400 3.400-8.600 8.600-4.300 1 .9-4.400z" fill="#ccb42c"/><path d="M5.300 11.900l5.600-5.600" stroke="#fff" stroke-width=".7" opacity=".75"/><path d="M2.900 13.500l1.700 1.700-2.100.5z" fill="#fff" opacity=".8"/></svg><div class="bal" style="left:1730px;top:756.5px"><svg class="abs" style="left:9.500px;top:7.500px" width="12" height="12" viewBox="0 0 12 12"><path d="M5.200.8v6h6a5.600 5.600 0 1 1-6-6z" fill="#fff" transform="translate(-.3 .3) scale(.92)"/><path d="M6.300 0a5.300 5.300 0 0 1 5.300 5.300H6.300z" fill="#fff"/><path d="M6.600 7.200h4.800a5.600 5.600 0 0 1-1.500 3.300z" fill="#fff"/></svg><span class="abs" style="left:24.900px;top:0">Balance</span></div><svg class="abs" style="left:1819.500px;top:759.5px" width="18" height="18" viewBox="0 0 18 18"><rect x="3" y="3" width="12" height="12" rx="1.600" transform="rotate(45 9 9)" fill="#ccb42c"/><path d="M5.600 11.600V9.800c0-1.300 1-2.300 2.300-2.300h2V5.600L13 8.500l-3.100 2.900V9.500h-2c-.2 0-.4.200-.4.400v1.700z" fill="#fff"/></svg>
<svg class="abs" style="left:1696px;top:812.0px" width="18" height="18" viewBox="0 0 18 18"><path d="M13.200 1.400c.7-.7 1.800-.7 2.500 0l.9.900c.7.700.7 1.800 0 2.500l-1.300 1.300-3.400-3.400zM11 3.600l3.400 3.400-8.600 8.600-4.300 1 .9-4.400z" fill="#ccb42c"/><path d="M5.300 11.900l5.600-5.600" stroke="#fff" stroke-width=".7" opacity=".75"/><path d="M2.900 13.500l1.700 1.700-2.100.5z" fill="#fff" opacity=".8"/></svg><div class="bal" style="left:1730px;top:808.5px"><svg class="abs" style="left:9.500px;top:7.500px" width="12" height="12" viewBox="0 0 12 12"><path d="M5.200.8v6h6a5.600 5.600 0 1 1-6-6z" fill="#fff" transform="translate(-.3 .3) scale(.92)"/><path d="M6.300 0a5.300 5.300 0 0 1 5.300 5.300H6.300z" fill="#fff"/><path d="M6.600 7.200h4.800a5.600 5.600 0 0 1-1.500 3.300z" fill="#fff"/></svg><span class="abs" style="left:24.900px;top:0">Balance</span></div><svg class="abs" style="left:1819.500px;top:811.5px" width="18" height="18" viewBox="0 0 18 18"><rect x="3" y="3" width="12" height="12" rx="1.600" transform="rotate(45 9 9)" fill="#ccb42c"/><path d="M5.600 11.600V9.800c0-1.300 1-2.300 2.300-2.300h2V5.600L13 8.500l-3.100 2.900V9.500h-2c-.2 0-.4.200-.4.400v1.700z" fill="#fff"/></svg>
<svg class="abs" style="left:1696px;top:864.0px" width="18" height="18" viewBox="0 0 18 18"><path d="M13.200 1.400c.7-.7 1.800-.7 2.500 0l.9.900c.7.700.7 1.800 0 2.500l-1.300 1.300-3.400-3.400zM11 3.600l3.400 3.400-8.600 8.600-4.300 1 .9-4.400z" fill="#ccb42c"/><path d="M5.300 11.900l5.600-5.600" stroke="#fff" stroke-width=".7" opacity=".75"/><path d="M2.900 13.500l1.700 1.700-2.100.5z" fill="#fff" opacity=".8"/></svg><div class="bal" style="left:1730px;top:860.5px"><svg class="abs" style="left:9.500px;top:7.500px" width="12" height="12" viewBox="0 0 12 12"><path d="M5.200.8v6h6a5.600 5.600 0 1 1-6-6z" fill="#fff" transform="translate(-.3 .3) scale(.92)"/><path d="M6.300 0a5.300 5.300 0 0 1 5.300 5.300H6.300z" fill="#fff"/><path d="M6.600 7.200h4.800a5.600 5.600 0 0 1-1.500 3.300z" fill="#fff"/></svg><span class="abs" style="left:24.900px;top:0">Balance</span></div><svg class="abs" style="left:1819.500px;top:863.5px" width="18" height="18" viewBox="0 0 18 18"><rect x="3" y="3" width="12" height="12" rx="1.600" transform="rotate(45 9 9)" fill="#ccb42c"/><path d="M5.600 11.600V9.800c0-1.300 1-2.300 2.300-2.300h2V5.600L13 8.500l-3.100 2.900V9.500h-2c-.2 0-.4.200-.4.400v1.700z" fill="#fff"/></svg>
<div class="blk" style="left:433px;top:378px;width:16px;height:16px;background:#dedede"></div><div class="blk" style="left:449px;top:378px;width:16px;height:16px;background:#dcdcda"></div><div class="blk" style="left:465px;top:378px;width:16px;height:16px;background:#e3e3e3"></div><div class="blk" style="left:481px;top:378px;width:16px;height:16px;background:#dfdfdf"></div><div class="blk" style="left:497px;top:378px;width:16px;height:16px;background:#e0e0e0"></div><div class="blk" style="left:513px;top:378px;width:16px;height:16px;background:#eceeed"></div><div class="blk" style="left:529px;top:378px;width:16px;height:16px;background:#e0e0e0"></div><div class="blk" style="left:545px;top:378px;width:16px;height:16px;background:#dcdedd"></div><div class="blk" style="left:561px;top:378px;width:16px;height:16px;background:#dddddd"></div><div class="blk" style="left:577px;top:378px;width:16px;height:16px;background:#dddddd"></div><div class="blk" style="left:593px;top:378px;width:16px;height:16px;background:#dadada"></div><div class="blk" style="left:609px;top:378px;width:16px;height:16px;background:#f4f4f4"></div><div class="blk" style="left:433px;top:426px;width:16px;height:16px;background:#dfdddd"></div><div class="blk" style="left:449px;top:426px;width:16px;height:16px;background:#e8e9eb"></div><div class="blk" style="left:465px;top:426px;width:16px;height:16px;background:#e0e0e0"></div><div class="blk" style="left:481px;top:426px;width:16px;height:16px;background:#e6e6e6"></div><div class="blk" style="left:497px;top:426px;width:16px;height:16px;background:#e7e8e8"></div><div class="blk" style="left:513px;top:426px;width:16px;height:16px;background:#e7e8e8"></div><div class="blk" style="left:529px;top:426px;width:16px;height:16px;background:#e0e0e0"></div><div class="blk" style="left:545px;top:426px;width:16px;height:16px;background:#e8e8e8"></div><div class="blk" style="left:561px;top:426px;width:16px;height:16px;background:#f1f2f4"></div><div class="blk" style="left:577px;top:426px;width:16px;height:16px;background:#dfdfe1"></div><div class="blk" style="left:593px;top:426px;width:16px;height:16px;background:#dfe0e2"></div><div class="blk" style="left:609px;top:426px;width:16px;height:16px;background:#f6f6f6"></div><div class="blk" style="left:433px;top:442px;width:16px;height:16px;background:#e0e0e0"></div><div class="blk" style="left:449px;top:442px;width:16px;height:16px;background:#e6e7e9"></div><div class="blk" style="left:465px;top:442px;width:16px;height:16px;background:#dcdde0"></div><div class="blk" style="left:481px;top:442px;width:16px;height:16px;background:#e2e2e2"></div><div class="blk" style="left:497px;top:442px;width:16px;height:16px;background:#dbdbdb"></div><div class="blk" style="left:513px;top:442px;width:16px;height:16px;background:#dfe0e2"></div><div class="blk" style="left:529px;top:442px;width:16px;height:16px;background:#e0e0e2"></div><div class="blk" style="left:545px;top:442px;width:16px;height:16px;background:#dddddd"></div><div class="blk" style="left:561px;top:442px;width:16px;height:16px;background:#e6e6e6"></div><div class="blk" style="left:577px;top:442px;width:16px;height:16px;background:#fafafe"></div><div class="blk" style="left:433px;top:490px;width:16px;height:16px;background:#dedede"></div><div class="blk" style="left:449px;top:490px;width:16px;height:16px;background:#dcdcda"></div><div class="blk" style="left:465px;top:490px;width:16px;height:16px;background:#e3e3e3"></div><div class="blk" style="left:481px;top:490px;width:16px;height:16px;background:#dfdfdf"></div><div class="blk" style="left:497px;top:490px;width:16px;height:16px;background:#e0e0e0"></div><div class="blk" style="left:513px;top:490px;width:16px;height:16px;background:#eceeed"></div><div class="blk" style="left:529px;top:490px;width:16px;height:16px;background:#e0e0e0"></div><div class="blk" style="left:545px;top:490px;width:16px;height:16px;background:#dcdedd"></div><div class="blk" style="left:561px;top:490px;width:16px;height:16px;background:#dddddd"></div><div class="blk" style="left:577px;top:490px;width:16px;height:16px;background:#dddddd"></div><div class="blk" style="left:593px;top:490px;width:16px;height:16px;background:#dadada"></div><div class="blk" style="left:609px;top:490px;width:16px;height:16px;background:#f4f4f4"></div><div class="blk" style="left:433px;top:538px;width:16px;height:16px;background:#e5e5e5"></div><div class="blk" style="left:449px;top:538px;width:16px;height:16px;background:#e3e3e1"></div><div class="blk" style="left:465px;top:538px;width:16px;height:16px;background:#e9e9e9"></div><div class="blk" style="left:481px;top:538px;width:16px;height:16px;background:#e5e5e5"></div><div class="blk" style="left:497px;top:538px;width:16px;height:16px;background:#e6e6e6"></div><div class="blk" style="left:513px;top:538px;width:16px;height:16px;background:#f0f1f1"></div><div class="blk" style="left:529px;top:538px;width:16px;height:16px;background:#e6e6e6"></div><div class="blk" style="left:545px;top:538px;width:16px;height:16px;background:#e3e5e4"></div><div class="blk" style="left:561px;top:538px;width:16px;height:16px;background:#e4e4e4"></div><div class="blk" style="left:577px;top:538px;width:16px;height:16px;background:#e4e4e4"></div><div class="blk" style="left:593px;top:538px;width:16px;height:16px;background:#e1e1e1"></div><div class="blk" style="left:609px;top:538px;width:16px;height:16px;background:#f6f6f6"></div><div class="blk" style="left:433px;top:554px;width:16px;height:16px;background:#fbfaf8"></div><div class="blk" style="left:449px;top:554px;width:16px;height:16px;background:#f8f8f8"></div><div class="blk" style="left:465px;top:554px;width:16px;height:16px;background:#fbfbfb"></div><div class="blk" style="left:481px;top:554px;width:16px;height:16px;background:#fafafa"></div><div class="blk" style="left:497px;top:554px;width:16px;height:16px;background:#fbfbfb"></div><div class="blk" style="left:513px;top:554px;width:16px;height:16px;background:#fdfdfd"></div><div class="blk" style="left:529px;top:554px;width:16px;height:16px;background:#fbfbfb"></div><div class="blk" style="left:545px;top:554px;width:16px;height:16px;background:#fafafa"></div><div class="blk" style="left:561px;top:554px;width:16px;height:16px;background:#fbfbfb"></div><div class="blk" style="left:577px;top:554px;width:16px;height:16px;background:#fbfbfb"></div><div class="blk" style="left:593px;top:554px;width:16px;height:16px;background:#fbfbfb"></div><div class="blk" style="left:433px;top:586px;width:16px;height:16px;background:#efefef"></div><div class="blk" style="left:449px;top:586px;width:16px;height:16px;background:#efefef"></div><div class="blk" style="left:465px;top:586px;width:16px;height:16px;background:#f0f0f0"></div><div class="blk" style="left:481px;top:586px;width:16px;height:16px;background:#f0f1f1"></div><div class="blk" style="left:497px;top:586px;width:16px;height:16px;background:#f0f1f1"></div><div class="blk" style="left:513px;top:586px;width:16px;height:16px;background:#f6f6f6"></div><div class="blk" style="left:529px;top:586px;width:16px;height:16px;background:#eeeeee"></div><div class="blk" style="left:545px;top:586px;width:16px;height:16px;background:#eeeeee"></div><div class="blk" style="left:561px;top:586px;width:16px;height:16px;background:#efefef"></div><div class="blk" style="left:577px;top:586px;width:16px;height:16px;background:#ededed"></div><div class="blk" style="left:593px;top:586px;width:16px;height:16px;background:#eeeeee"></div><div class="blk" style="left:609px;top:586px;width:16px;height:16px;background:#f6f6f6"></div><div class="blk" style="left:433px;top:602px;width:16px;height:16px;background:#ebebeb"></div><div class="blk" style="left:449px;top:602px;width:16px;height:16px;background:#e9e9e9"></div><div class="blk" style="left:465px;top:602px;width:16px;height:16px;background:#ededed"></div><div class="blk" style="left:481px;top:602px;width:16px;height:16px;background:#e9e9e9"></div><div class="blk" style="left:497px;top:602px;width:16px;height:16px;background:#ebebeb"></div><div class="blk" style="left:513px;top:602px;width:16px;height:16px;background:#efefef"></div><div class="blk" style="left:529px;top:602px;width:16px;height:16px;background:#ececec"></div><div class="blk" style="left:545px;top:602px;width:16px;height:16px;background:#ebebeb"></div><div class="blk" style="left:561px;top:602px;width:16px;height:16px;background:#ebebeb"></div><div class="blk" style="left:577px;top:602px;width:16px;height:16px;background:#ececec"></div><div class="blk" style="left:593px;top:602px;width:16px;height:16px;background:#ebebeb"></div><div class="blk" style="left:609px;top:602px;width:16px;height:16px;background:#f6f6f6"></div><div class="blk" style="left:433px;top:634px;width:16px;height:16px;background:#f3f3f3"></div><div class="blk" style="left:449px;top:634px;width:16px;height:16px;background:#f3f3f3"></div><div class="blk" style="left:465px;top:634px;width:16px;height:16px;background:#f4f4f4"></div><div class="blk" style="left:481px;top:634px;width:16px;height:16px;background:#f4f5f5"></div><div class="blk" style="left:497px;top:634px;width:16px;height:16px;background:#f4f4f4"></div><div class="blk" style="left:513px;top:634px;width:16px;height:16px;background:#fafafa"></div><div class="blk" style="left:529px;top:634px;width:16px;height:16px;background:#f2f2f2"></div><div class="blk" style="left:545px;top:634px;width:16px;height:16px;background:#f0f0f0"></div><div class="blk" style="left:561px;top:634px;width:16px;height:16px;background:#fafbfb"></div><div class="blk" style="left:433px;top:650px;width:16px;height:16px;background:#eeeeee"></div><div class="blk" style="left:449px;top:650px;width:16px;height:16px;background:#ededed"></div><div class="blk" style="left:465px;top:650px;width:16px;height:16px;background:#f1f1f1"></div><div class="blk" style="left:481px;top:650px;width:16px;height:16px;background:#ececec"></div><div class="blk" style="left:497px;top:650px;width:16px;height:16px;background:#eeeeee"></div><div class="blk" style="left:513px;top:650px;width:16px;height:16px;background:#f2f3f3"></div><div class="blk" style="left:529px;top:650px;width:16px;height:16px;background:#f2f2f2"></div><div class="blk" style="left:545px;top:650px;width:16px;height:16px;background:#efefef"></div><div class="blk" style="left:561px;top:650px;width:16px;height:16px;background:#f9fafa"></div><div class="blk" style="left:433px;top:666px;width:16px;height:16px;background:#e0e0e0"></div><div class="blk" style="left:449px;top:666px;width:16px;height:16px;background:#e6e7e9"></div><div class="blk" style="left:465px;top:666px;width:16px;height:16px;background:#dcdde0"></div><div class="blk" style="left:481px;top:666px;width:16px;height:16px;background:#e2e2e2"></div><div class="blk" style="left:497px;top:666px;width:16px;height:16px;background:#dbdbdb"></div><div class="blk" style="left:513px;top:666px;width:16px;height:16px;background:#dfe0e2"></div><div class="blk" style="left:529px;top:666px;width:16px;height:16px;background:#e0e0e2"></div><div class="blk" style="left:545px;top:666px;width:16px;height:16px;background:#dddddd"></div><div class="blk" style="left:561px;top:666px;width:16px;height:16px;background:#e0e0e0"></div><div class="blk" style="left:577px;top:666px;width:16px;height:16px;background:#f8f9fc"></div><div class="blk" style="left:433px;top:714px;width:16px;height:16px;background:#e0dfdf"></div><div class="blk" style="left:449px;top:714px;width:16px;height:16px;background:#e0e0e1"></div><div class="blk" style="left:465px;top:714px;width:16px;height:16px;background:#e1e1e1"></div><div class="blk" style="left:481px;top:714px;width:16px;height:16px;background:#e0e0e0"></div><div class="blk" style="left:497px;top:714px;width:16px;height:16px;background:#e1e2e2"></div><div class="blk" style="left:513px;top:714px;width:16px;height:16px;background:#e3e3e3"></div><div class="blk" style="left:433px;top:762px;width:16px;height:16px;background:#e0e0e0"></div><div class="blk" style="left:449px;top:762px;width:16px;height:16px;background:#dddddd"></div><div class="blk" style="left:465px;top:762px;width:16px;height:16px;background:#e4e5e7"></div><div class="blk" style="left:481px;top:762px;width:16px;height:16px;background:#dfe0e2"></div><div class="blk" style="left:497px;top:762px;width:16px;height:16px;background:#e2e2e2"></div><div class="blk" style="left:513px;top:762px;width:16px;height:16px;background:#eeeeee"></div><div class="blk" style="left:529px;top:762px;width:16px;height:16px;background:#e0e0e0"></div><div class="blk" style="left:545px;top:762px;width:16px;height:16px;background:#dedede"></div><div class="blk" style="left:561px;top:762px;width:16px;height:16px;background:#dfdddd"></div><div class="blk" style="left:577px;top:762px;width:16px;height:16px;background:#dcdcdc"></div><div class="blk" style="left:593px;top:762px;width:16px;height:16px;background:#dfdfdf"></div><div class="blk" style="left:609px;top:762px;width:16px;height:16px;background:#fafafa"></div><div class="blk" style="left:433px;top:810px;width:16px;height:16px;background:#dfdfdf"></div><div class="blk" style="left:449px;top:810px;width:16px;height:16px;background:#dfdfdf"></div><div class="blk" style="left:465px;top:810px;width:16px;height:16px;background:#e4e5e7"></div><div class="blk" style="left:481px;top:810px;width:16px;height:16px;background:#e0e1e1"></div><div class="blk" style="left:497px;top:810px;width:16px;height:16px;background:#e2e2e2"></div><div class="blk" style="left:513px;top:810px;width:16px;height:16px;background:#ebebeb"></div><div class="blk" style="left:529px;top:810px;width:16px;height:16px;background:#e0e0e0"></div><div class="blk" style="left:545px;top:810px;width:16px;height:16px;background:#dedede"></div><div class="blk" style="left:561px;top:810px;width:16px;height:16px;background:#dedcdb"></div><div class="blk" style="left:577px;top:810px;width:16px;height:16px;background:#dddddd"></div><div class="blk" style="left:593px;top:810px;width:16px;height:16px;background:#e0e0e0"></div><div class="blk" style="left:609px;top:810px;width:16px;height:16px;background:#f6f7f9"></div><div class="blk" style="left:433px;top:826px;width:16px;height:16px;background:#f6f6f6"></div><div class="blk" style="left:449px;top:826px;width:16px;height:16px;background:#f3f3f3"></div><div class="blk" style="left:465px;top:826px;width:16px;height:16px;background:#f5f5f5"></div><div class="blk" style="left:481px;top:826px;width:16px;height:16px;background:#f4f4f4"></div><div class="blk" style="left:497px;top:826px;width:16px;height:16px;background:#f5f5f5"></div><div class="blk" style="left:513px;top:826px;width:16px;height:16px;background:#f6f6f6"></div><div class="blk" style="left:529px;top:826px;width:16px;height:16px;background:#f4f4f4"></div><div class="blk" style="left:545px;top:826px;width:16px;height:16px;background:#f5f5f5"></div><div class="blk" style="left:561px;top:826px;width:16px;height:16px;background:#f5f5f5"></div><div class="blk" style="left:577px;top:826px;width:16px;height:16px;background:#f5f5f5"></div><div class="blk" style="left:593px;top:826px;width:16px;height:16px;background:#f5f5f5"></div><div class="blk" style="left:433px;top:858px;width:16px;height:16px;background:#f2f2f2"></div><div class="blk" style="left:449px;top:858px;width:16px;height:16px;background:#f2f2f2"></div><div class="blk" style="left:465px;top:858px;width:16px;height:16px;background:#f3f4f4"></div><div class="blk" style="left:481px;top:858px;width:16px;height:16px;background:#f3f4f4"></div><div class="blk" style="left:497px;top:858px;width:16px;height:16px;background:#f3f3f3"></div><div class="blk" style="left:513px;top:858px;width:16px;height:16px;background:#fbfbfb"></div><div class="blk" style="left:529px;top:858px;width:16px;height:16px;background:#f1f1f1"></div><div class="blk" style="left:545px;top:858px;width:16px;height:16px;background:#f1f1f1"></div><div class="blk" style="left:561px;top:858px;width:16px;height:16px;background:#f0f0f0"></div><div class="blk" style="left:577px;top:858px;width:16px;height:16px;background:#f1f1f1"></div><div class="blk" style="left:593px;top:858px;width:16px;height:16px;background:#eeeeee"></div><div class="blk" style="left:609px;top:858px;width:16px;height:16px;background:#f8f8f8"></div><div class="blk" style="left:433px;top:874px;width:16px;height:16px;background:#e3e3e3"></div><div class="blk" style="left:449px;top:874px;width:16px;height:16px;background:#e0e0e0"></div><div class="blk" style="left:465px;top:874px;width:16px;height:16px;background:#e7e8ea"></div><div class="blk" style="left:481px;top:874px;width:16px;height:16px;background:#e0e0e0"></div><div class="blk" style="left:497px;top:874px;width:16px;height:16px;background:#e2e2e2"></div><div class="blk" style="left:513px;top:874px;width:16px;height:16px;background:#ecedee"></div><div class="blk" style="left:529px;top:874px;width:16px;height:16px;background:#e3e3e3"></div><div class="blk" style="left:545px;top:874px;width:16px;height:16px;background:#e2e2e2"></div><div class="blk" style="left:561px;top:874px;width:16px;height:16px;background:#e2e2e2"></div><div class="blk" style="left:577px;top:874px;width:16px;height:16px;background:#e3e3e3"></div><div class="blk" style="left:593px;top:874px;width:16px;height:16px;background:#e0e2e5"></div><div class="blk" style="left:609px;top:874px;width:16px;height:16px;background:#f6f6f6"></div>
<div class="blk" style="left:1541px;top:376px;width:112px;height:16px;background:#e3e3e3"></div><div class="blk" style="left:1653px;top:376px;width:16px;height:16px;background:#f3f3f3"></div><div class="blk" style="left:1541px;top:424px;width:80px;height:16px;background:#f3f3f3"></div><div class="blk" style="left:1621px;top:424px;width:16px;height:16px;background:#fbfbfb"></div><div class="blk" style="left:1541px;top:440px;width:80px;height:16px;background:#eeeeef"></div><div class="blk" style="left:1621px;top:440px;width:16px;height:16px;background:#fafafa"></div><div class="blk" style="left:1541px;top:488px;width:16px;height:16px;background:#ededec"></div><div class="blk" style="left:1557px;top:488px;width:48px;height:16px;background:#dedede"></div><div class="blk" style="left:1605px;top:488px;width:16px;height:16px;background:#ebebeb"></div><div class="blk" style="left:1605px;top:504px;width:16px;height:16px;background:#f4f4f4"></div><div class="blk" style="left:1541px;top:536px;width:96px;height:16px;background:#ececec"></div><div class="blk" style="left:1637px;top:536px;width:16px;height:16px;background:#fbfbfb"></div><div class="blk" style="left:1541px;top:552px;width:96px;height:16px;background:#f4f4f4"></div><div class="blk" style="left:1541px;top:584px;width:80px;height:16px;background:#f5f5f5"></div><div class="blk" style="left:1541px;top:600px;width:16px;height:16px;background:#eeeeec"></div><div class="blk" style="left:1557px;top:600px;width:16px;height:16px;background:#d9dadc"></div><div class="blk" style="left:1573px;top:600px;width:16px;height:16px;background:#e8e8e6"></div><div class="blk" style="left:1589px;top:600px;width:32px;height:16px;background:#dfdfe1"></div><div class="blk" style="left:1541px;top:648px;width:80px;height:16px;background:#ebebeb"></div><div class="blk" style="left:1621px;top:648px;width:16px;height:16px;background:#fafafa"></div><div class="blk" style="left:1557px;top:664px;width:64px;height:16px;background:#f8f8f8"></div><div class="blk" style="left:1541px;top:712px;width:80px;height:16px;background:#e4e4e4"></div><div class="blk" style="left:1621px;top:712px;width:16px;height:16px;background:#f3f4f4"></div><div class="blk" style="left:1541px;top:760px;width:112px;height:16px;background:#e3e3e3"></div><div class="blk" style="left:1541px;top:808px;width:80px;height:16px;background:#ececec"></div><div class="blk" style="left:1621px;top:808px;width:16px;height:16px;background:#f7f8f8"></div><div class="blk" style="left:1541px;top:824px;width:80px;height:16px;background:#f0f0f0"></div><div class="blk" style="left:1541px;top:872px;width:16px;height:16px;background:#efefef"></div><div class="blk" style="left:1557px;top:872px;width:96px;height:16px;background:#e0e0e1"></div>
</body></html>
